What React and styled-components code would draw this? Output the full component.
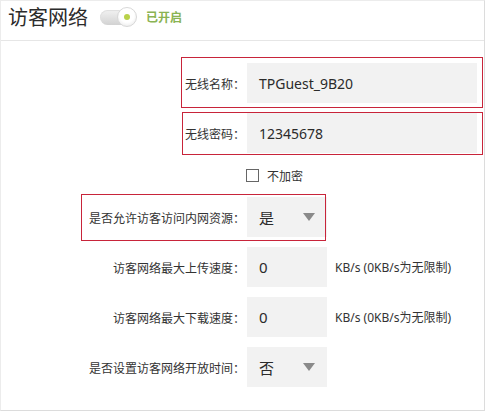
import React from "react";
import styled, { createGlobalStyle } from "styled-components";

const GlobalStyle = createGlobalStyle`
  body {
    margin: 0;
    background: #fff;
    font-family: "Noto Sans", "Noto Sans CJK SC", sans-serif;
  }
`;

const Panel = styled.div`
  width: 485px;
  height: 411px;
  box-sizing: border-box;
  border: 1px solid #dcdcdc;
  border-top-color: #ececec;
  border-left-color: #ececec;
  background: #fff;
`;

const Header = styled.div`
  height: 40px;
  box-sizing: border-box;
  padding: 0 0 8px 7px;
  display: flex;
  align-items: center;
  border-bottom: 1px solid #e6e6e6;
`;

const Title = styled.h1`
  margin: 0 12px 0 0;
  font-family: "Noto Sans CJK SC", sans-serif;
  font-size: 20px;
  font-weight: 400;
  color: #2b2b2b;
`;

const Toggle = styled.span`
  position: relative;
  width: 37px;
  height: 20px;
  display: inline-block;
  margin-right: 9px;
  &::before {
    content: "";
    position: absolute;
    left: 0;
    top: 3px;
    width: 32px;
    height: 15px;
    border-radius: 8px;
    background: linear-gradient(#f2f2f2, #d2d2d2);
    box-shadow: inset 0 1px 1px rgba(0, 0, 0, 0.08);
  }
`;

const Knob = styled.span`
  position: absolute;
  right: 0;
  top: 0;
  width: 18px;
  height: 18px;
  border-radius: 50%;
  background: radial-gradient(circle at 50% 40%, #fff 50%, #e2e2e2);
  border: 1px solid #d8d8d8;
  display: flex;
  align-items: center;
  justify-content: center;
  &::after {
    content: "";
    width: 6px;
    height: 6px;
    border-radius: 50%;
    background: #b9d24a;
  }
`;

const Status = styled.span`
  font-family: "Noto Sans CJK SC", sans-serif;
  font-size: 12px;
  font-weight: 700;
  color: #8ab353;
`;

const Form = styled.div`
  padding-top: 22px;
  display: flex;
  flex-direction: column;
  gap: 10px;
`;

const Row = styled.div`
  position: relative;
  display: flex;
  align-items: center;
  height: ${(p) => p.$h || 40}px;
  &::before {
    content: "";
    display: ${(p) => (p.$mark ? "block" : "none")};
    position: absolute;
    pointer-events: none;
    border: 1px solid #c8243a;
    ${(p) =>
      p.$mark &&
      `top: ${p.$mark[0]}px; right: ${p.$mark[1]}px; bottom: ${p.$mark[2]}px; left: ${p.$mark[3]}px;`}
  }
`;

const Label = styled.label`
  width: 246px;
  box-sizing: border-box;
  padding-right: 2px;
  text-align: right;
  flex-shrink: 0;
  font-family: "Noto Sans CJK SC", sans-serif;
  font-size: 12px;
  color: #333;
`;

const Field = styled.div`
  width: ${(p) => p.$w}px;
  height: 40px;
  box-sizing: border-box;
  padding: 0 12px;
  background: #f2f2f2;
  display: flex;
  align-items: center;
  justify-content: space-between;
  font-family: "Noto Sans", "Noto Sans CJK SC", sans-serif;
  font-size: ${(p) => p.$fs || 14}px;
  color: #2b2b2b;
`;

const Arrow = styled.span`
  width: 0;
  height: 0;
  border-left: 6px solid transparent;
  border-right: 6px solid transparent;
  border-top: 8px solid #8a8a8a;
`;

const Unit = styled.span`
  margin-left: 8px;
  font-family: "Noto Sans", "Noto Sans CJK SC", sans-serif;
  font-size: 12px;
  color: #333;
`;

const CheckLine = styled.label`
  margin-left: 245px;
  display: flex;
  align-items: center;
  gap: 8px;
  font-family: "Noto Sans CJK SC", sans-serif;
  font-size: 12px;
  color: #333;
`;

const Box = styled.span`
  width: 11px;
  height: 11px;
  border: 1px solid #666;
  background: #fff;
`;

export default function App() {
  return (
    <Panel>
      <GlobalStyle />
      <Header>
        <Title>访客网络</Title>
        <Toggle>
          <Knob />
        </Toggle>
        <Status>已开启</Status>
      </Header>
      <Form>
        <Row $mark={[-6, 1, -5, 180]}>
          <Label>无线名称：</Label>
          <Field $w={230}>TPGuest_9B20</Field>
        </Row>
        <Row $mark={[-1, 1, -2, 181]}>
          <Label>无线密码：</Label>
          <Field $w={230}>12345678</Field>
        </Row>
        <Row $h={24}>
          <CheckLine>
            <Box />
            不加密
          </CheckLine>
        </Row>
        <Row $mark={[-3, 158, -4, 80]}>
          <Label>是否允许访客访问内网资源：</Label>
          <Field $w={80} $fs={15}>
            是<Arrow />
          </Field>
        </Row>
        <Row>
          <Label>访客网络最大上传速度：</Label>
          <Field $w={80} $fs={15}>0</Field>
          <Unit>KB/s (0KB/s为无限制)</Unit>
        </Row>
        <Row>
          <Label>访客网络最大下载速度：</Label>
          <Field $w={80} $fs={15}>0</Field>
          <Unit>KB/s (0KB/s为无限制)</Unit>
        </Row>
        <Row>
          <Label>是否设置访客网络开放时间：</Label>
          <Field $w={80} $fs={15}>
            否<Arrow />
          </Field>
        </Row>
      </Form>
    </Panel>
  );
}
